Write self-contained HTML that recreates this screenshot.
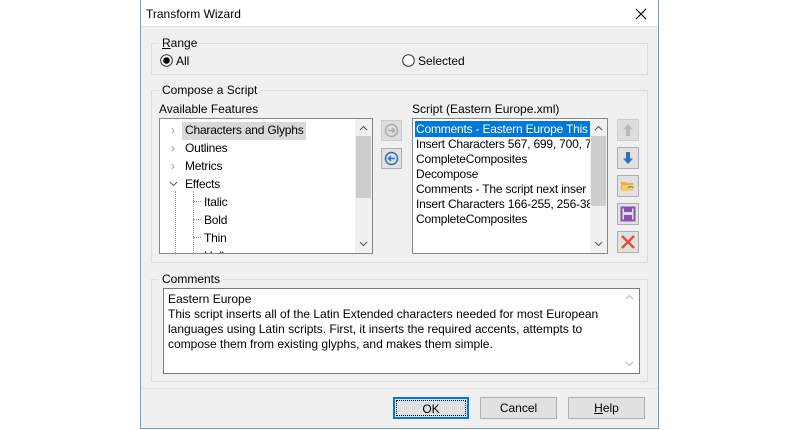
<!DOCTYPE html>
<html><head><style>
*{box-sizing:border-box;margin:0;padding:0}
body{width:800px;height:430px;background:#fff;font-family:"Liberation Sans",sans-serif;font-size:12px;color:#000;position:relative;overflow:hidden}
.a{position:absolute}
.dlg{left:140px;top:-1px;width:519px;height:430px;border:1px solid #6d9fcf;background:#f0f0f0}
.title{left:0;top:0;width:517px;height:27px;background:#fff;border-bottom:1px solid #e3e3e3}
.grp{border:1px solid #dcdcdc}
.lbl{background:#f0f0f0;padding:0 3px}
.list{background:#fff;border:1px solid #828790}
.sb{background:#f0f0f0}
.thumb{background:#cdcdcd}
.btn{background:#e1e1e1;border:1px solid #adadad;text-align:center;line-height:20px}
.ib{background:#e1e1e1;border:1px solid #adadad;width:22px;height:22px}
.item{position:absolute;left:3px;white-space:nowrap;letter-spacing:-0.2px}
</style></head><body>
<div class="a dlg">
 <div class="a title"><span class="a" style="left:5px;top:7px">Transform Wizard</span>
  <svg class="a" style="left:494px;top:8px" width="12" height="12"><path d="M1 1L11 11M11 1L1 11" stroke="#000" stroke-width="1.2"/></svg></div>
 <div class="a grp" style="left:10px;top:43px;width:497px;height:32px"></div>
 <span class="a lbl" style="left:18px;top:36px"><u>R</u>ange</span>
 <svg class="a" style="left:19px;top:54px" width="13" height="13"><circle cx="6.5" cy="6.5" r="5.8" fill="#fff" stroke="#333"/><circle cx="6.5" cy="6.5" r="3.3" fill="#000"/></svg>
 <span class="a" style="left:35px;top:54px">All</span>
 <svg class="a" style="left:261px;top:54px" width="13" height="13"><circle cx="6.5" cy="6.5" r="5.8" fill="#fff" stroke="#333"/></svg>
 <span class="a" style="left:277px;top:54px">Selected</span>
 <div class="a grp" style="left:10px;top:90px;width:497px;height:173px"></div>
 <span class="a lbl" style="left:18px;top:83px">Compose a Script</span>
 <span class="a" style="left:18px;top:102px">Available Features</span>
 <div class="a list" style="left:18px;top:118px;width:214px;height:136px;overflow:hidden">
  <div class="a" style="left:22px;top:3px;width:124px;height:18px;background:#d9d9d9"></div>
  <span class="item" style="left:11px;top:4px;color:#999">›</span><span class="item" style="left:25px;top:4px">Characters and Glyphs</span>
  <span class="item" style="left:11px;top:22px;color:#999">›</span><span class="item" style="left:25px;top:22px">Outlines</span>
  <span class="item" style="left:11px;top:40px;color:#999">›</span><span class="item" style="left:25px;top:40px">Metrics</span>
  <svg class="a" style="left:9px;top:62px" width="9" height="6"><path d="M1 1L4.5 4.5L8 1" stroke="#555" fill="none"/></svg><span class="item" style="left:25px;top:58px">Effects</span>
  <div class="a" style="left:15px;top:72px;height:70px;border-left:1px dotted #999"></div>
  <div class="a" style="left:33px;top:72px;height:70px;border-left:1px dotted #999"></div>
  <div class="a" style="left:33px;top:82px;width:8px;border-top:1px dotted #999"></div><span class="item" style="left:44px;top:76px">Italic</span>
  <div class="a" style="left:33px;top:100px;width:8px;border-top:1px dotted #999"></div><span class="item" style="left:44px;top:94px">Bold</span>
  <div class="a" style="left:33px;top:118px;width:8px;border-top:1px dotted #999"></div><span class="item" style="left:44px;top:112px">Thin</span>
  <span class="item" style="left:44px;top:130px">Hollow</span>
  <div class="a sb" style="left:195px;top:0;width:17px;height:134px"><div class="a thumb" style="left:1px;top:17px;width:15px;height:62px"></div>
   <svg class="a" style="left:4px;top:6px" width="9" height="6"><path d="M1 5L4.5 1.5L8 5" stroke="#555" fill="none"/></svg>
   <svg class="a" style="left:4px;top:122px" width="9" height="6"><path d="M1 1L4.5 4.5L8 1" stroke="#555" fill="none"/></svg></div>
 </div>
 <div class="a ib" style="left:240px;top:120px;width:21px;height:21px;background:#ddd;border-color:#ccc"><svg width="19" height="19"><circle cx="9.5" cy="9.5" r="6" fill="none" stroke="#aaa" stroke-width="1.5"/><path d="M6 9.5H12.5M10 7L12.5 9.5L10 12" stroke="#aaa" stroke-width="1.5" fill="none"/></svg></div>
 <div class="a ib" style="left:240px;top:148px;width:21px;height:21px"><svg width="19" height="19"><circle cx="9.5" cy="9.5" r="6" fill="none" stroke="#2f6fc0" stroke-width="1.5"/><path d="M6.5 9.5H13M9 7L6.5 9.5L9 12" stroke="#2f6fc0" stroke-width="1.5" fill="none"/></svg></div>
 <span class="a" style="left:271px;top:102px">Script (Eastern Europe.xml)</span>
 <div class="a list" style="left:271px;top:118px;width:196px;height:136px;overflow:hidden">
  <div class="a" style="left:2px;top:2px;width:175px;height:16px;background:#0078d7"></div>
  <span class="item" style="top:3px;color:#fff">Comments - Eastern Europe This</span>
  <span class="item" style="top:18px">Insert Characters 567, 699, 700, 71</span>
  <span class="item" style="top:33px">CompleteComposites</span>
  <span class="item" style="top:48px">Decompose</span>
  <span class="item" style="top:63px">Comments - The script next inser</span>
  <span class="item" style="top:78px">Insert Characters 166-255, 256-38</span>
  <span class="item" style="top:93px">CompleteComposites</span>
  <div class="a sb" style="left:177px;top:0;width:17px;height:134px"><div class="a thumb" style="left:1px;top:17px;width:15px;height:70px"></div>
   <svg class="a" style="left:4px;top:6px" width="9" height="6"><path d="M1 5L4.5 1.5L8 5" stroke="#555" fill="none"/></svg>
   <svg class="a" style="left:4px;top:122px" width="9" height="6"><path d="M1 1L4.5 4.5L8 1" stroke="#555" fill="none"/></svg></div>
 </div>
 <div class="a ib" style="left:476px;top:119px;background:#ddd;border-color:#ccc"><svg width="20" height="20"><path d="M10 4L15 9.5H12V16H8V9.5H5Z" fill="#bbb"/></svg></div>
 <div class="a ib" style="left:476px;top:147px"><svg width="20" height="20"><path d="M10 16L15 10.5H12V4H8V10.5H5Z" fill="#2f6fc0"/></svg></div>
 <div class="a ib" style="left:476px;top:175px"><svg width="20" height="20"><path d="M3 6H8L9 7H15V15H3Z" fill="#e8b04a"/><path d="M5 9H17L15 15H3Z" fill="#f6cd6a"/><path d="M10 12a3 3 0 0 1 5 0" stroke="#5a8fd0" fill="none" stroke-width="1.3"/></svg></div>
 <div class="a ib" style="left:476px;top:203px"><svg width="20" height="20"><rect x="3.5" y="3.5" width="13" height="13" fill="none" stroke="#8a4fb5" stroke-width="2"/><rect x="6" y="4" width="8" height="4" fill="#8a4fb5"/><rect x="6" y="11" width="8" height="5" fill="#8a4fb5"/></svg></div>
 <div class="a ib" style="left:476px;top:231px"><svg width="20" height="20"><path d="M4 4L16 16M16 4L4 16" stroke="#e0503a" stroke-width="2.4"/></svg></div>
 <div class="a grp" style="left:10px;top:279px;width:497px;height:103px"></div>
 <span class="a lbl" style="left:18px;top:272px">Comments</span>
 <div class="a list" style="left:22px;top:288px;width:477px;height:86px;border-color:#7a7a7a">
  <div class="a" style="left:4px;top:3px;line-height:15px;width:460px">Eastern Europe<br>This script inserts all of the Latin Extended characters needed for most European languages using Latin scripts. First, it inserts the required accents, attempts to compose them from existing glyphs, and makes them simple.</div>
  <svg class="a" style="left:461px;top:5px" width="9" height="6"><path d="M1 5L4.5 1.5L8 5" stroke="#bbb" fill="none"/></svg>
  <svg class="a" style="left:461px;top:72px" width="9" height="6"><path d="M1 1L4.5 4.5L8 1" stroke="#bbb" fill="none"/></svg>
 </div>
 <div class="a" style="left:0;top:388px;width:517px;height:1px;background:#dfdfdf"></div>
 <div class="a btn" style="left:252px;top:397px;width:76px;height:22px;border:2px solid #0078d7;outline:1px dotted #000;outline-offset:-4px">OK</div>
 <div class="a btn" style="left:339px;top:397px;width:77px;height:22px">Cancel</div>
 <div class="a btn" style="left:427px;top:397px;width:77px;height:22px"><u>H</u>elp</div>
</div>
</body></html>
